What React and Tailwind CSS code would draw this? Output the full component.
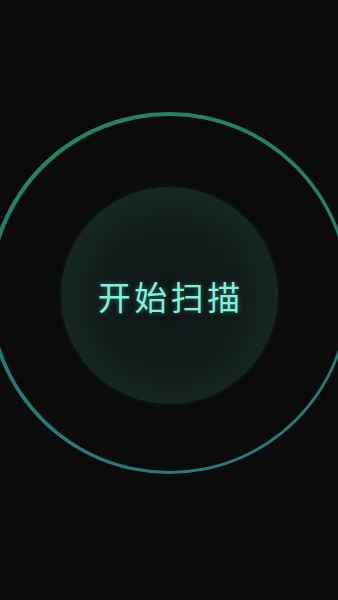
import React from "react";

export default function App() {
  return (
    <div className="h-[600px] w-full overflow-hidden bg-[#0b0b0b] flex justify-center items-start pt-[112px]">
      <div className="shrink-0 w-[362px] h-[362px] rounded-full p-[3.5px] bg-gradient-to-b from-[#238362] to-[#267a7d]">
        <div className="w-full h-full rounded-full bg-[#0b0b0b] flex items-center justify-center">
          <div
            className="w-[217px] h-[217px] mt-[4px] rounded-full flex items-center justify-center bg-[radial-gradient(circle_at_50%_52%,#0f1615_0%,#111c1a_45%,#162b27_80%,#18302b_100%)] shadow-[0_0_6px_rgba(40,120,100,0.15)]"
          >
            <span
              className="text-[33px] leading-none tracking-[3.5px] pl-[3.5px] mt-[2px] text-[#80f2de] [text-shadow:0_0_5px_rgba(110,240,210,0.4)]"
              style={{ fontFamily: '"Noto Sans CJK SC", "Noto Sans", sans-serif' }}
            >
              开始扫描
            </span>
          </div>
        </div>
      </div>
    </div>
  );
}
